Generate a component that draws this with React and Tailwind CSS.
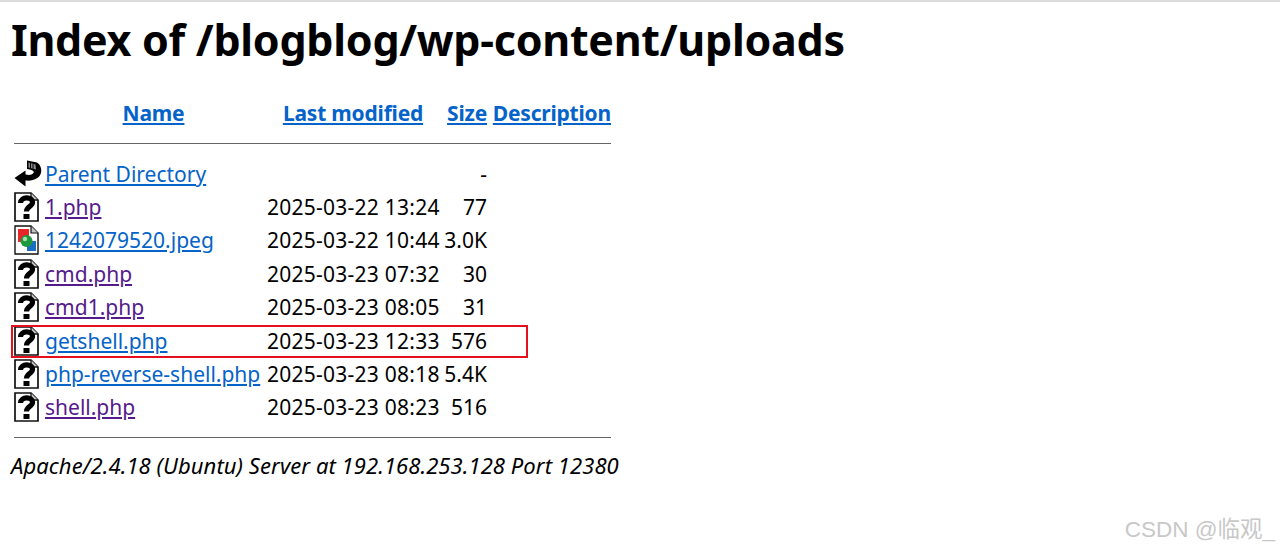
const Q = () => (
  <svg width="25" height="30" viewBox="0 0 25 30" className="block">
    <path d="M1 1H17L24 8V29H1Z" fill="#fff" stroke="#111" strokeWidth="1.7" />
    <path d="M17 1V8H24" fill="#c4c4c4" stroke="#111" strokeWidth="1.3" />
    <path d="M6.5 11C6.5 4.5 18.5 4 18.5 10.5C18.5 14.5 12.5 14.5 12.5 19.5" fill="none" stroke="#000" strokeWidth="5.2" />
    <rect x="9.5" y="22" width="6" height="5" fill="#000" />
  </svg>
);

const Back = () => (
  <svg width="28" height="27" viewBox="0 0 28 27" className="block">
    <path d="M13 0.5L23 2.5C28.5 6 28.5 14 24 17.5C20 20.5 15 21 11.5 20.5V26.5L0.5 18L11.5 10.5V14.5C15 15.5 18 15 19.5 13C20.5 11 18 9.5 13 9Z" fill="#000" />
    <path d="M14.5 2.5L21.5 4.5L22 9.5L14.5 7.5Z" fill="#8a8a8a" />
    <path d="M16.5 3V8M19 3.6V8.8" stroke="#000" strokeWidth="1" />
  </svg>
);

const Img = () => (
  <svg width="25" height="30" viewBox="0 0 25 30" className="block">
    <path d="M1 1H17L24 8V29H1Z" fill="#fff" stroke="#111" strokeWidth="1.4" />
    <path d="M17 1V8H24" fill="#c4c4c4" stroke="#111" strokeWidth="1.2" />
    <rect x="4" y="4" width="11" height="13" fill="#e8262a" />
    <path d="M13 16H22V26H13Z" fill="#1c6fc0" />
    <circle cx="12.5" cy="16" r="6" fill="#1e9a3e" />
    <circle cx="11" cy="14" r="2.2" fill="#a5e0ae" />
  </svg>
);

const rows = [
  { icon: <Back />, name: "Parent Directory", date: "", size: "-", visited: false },
  { icon: <Q />, name: "1.php", date: "2025-03-22 13:24", size: "77", visited: true },
  { icon: <Img />, name: "1242079520.jpeg", date: "2025-03-22 10:44", size: "3.0K", visited: false },
  { icon: <Q />, name: "cmd.php", date: "2025-03-23 07:32", size: "30", visited: true },
  { icon: <Q />, name: "cmd1.php", date: "2025-03-23 08:05", size: "31", visited: true },
  { icon: <Q />, name: "getshell.php", date: "2025-03-23 12:33", size: "576", visited: false },
  { icon: <Q />, name: "php-reverse-shell.php", date: "2025-03-23 08:18", size: "5.4K", visited: false },
  { icon: <Q />, name: "shell.php", date: "2025-03-23 08:23", size: "516", visited: true },
];

const Rule = () => (
  <tr className="h-[27px]">
    <td colSpan={5} className="p-0 pl-[3px] align-middle">
      <div className="h-px bg-[#666]" />
    </td>
  </tr>
);

export default function App() {
  return (
    <div className="relative h-[551px] overflow-hidden bg-white pl-[11px] text-black font-['Noto_Sans','Liberation_Sans',sans-serif] text-[21px] leading-[28px] border-t-2 border-[#dcdcdc]">
      <h1 className="pt-[13px] text-[43px] leading-[50px] font-bold tracking-[-0.28px]">Index of /blogblog/wp-content/uploads</h1>
      <table className="mt-[31px] border-separate border-spacing-0 w-[600px] table-fixed">
        <colgroup>
          <col className="w-[34px]" />
          <col className="w-[222px]" />
          <col className="w-[176px]" />
          <col className="w-[44px]" />
          <col className="w-[124px]" />
        </colgroup>
        <thead>
          <tr className="h-[34px] text-[#0563c9] underline tracking-[-0.2px]">
            <th className="pb-[1px]"></th>
            <th className="p-0 pb-[1px] pr-[5px] text-center font-bold"><a href="#">Name</a></th>
            <th className="p-0 pb-[1px] pr-[4px] text-center font-bold"><a href="#">Last modified</a></th>
            <th className="p-0 pb-[1px] text-right font-bold"><a href="#">Size</a></th>
            <th className="p-0 pb-[1px] text-right font-bold"><a href="#">Description</a></th>
          </tr>
          <Rule />
        </thead>
        <tbody>
          {rows.map((r) => (
            <tr key={r.name} className="h-[33.4px]">
              <td className="p-0 pl-[3px] align-middle">{r.icon}</td>
              <td className="p-0 whitespace-nowrap align-middle">
                <a href="#" className={r.visited ? "text-[#551a8b] underline" : "text-[#0563c9] underline"}>{r.name}</a>
              </td>
              <td className="p-0 whitespace-nowrap align-middle tracking-[0.25px]">{r.date}</td>
              <td className="p-0 text-right align-middle">{r.size}</td>
              <td className="p-0"></td>
            </tr>
          ))}
          <Rule />
        </tbody>
      </table>
      <address className="text-[22px] italic tracking-[0.07px]">Apache/2.4.18 (Ubuntu) Server at 192.168.253.128 Port 12380</address>
      <div className="absolute left-[11px] top-[323px] h-[33px] w-[517px] border-2 border-[#e60f1e]" />
      <div className="absolute right-[5px] bottom-[8px] text-[22.5px] leading-[26px] text-[#c8c8c8] font-['Liberation_Sans','Noto_Sans_CJK_SC',sans-serif]">CSDN @临观_</div>
    </div>
  );
}
